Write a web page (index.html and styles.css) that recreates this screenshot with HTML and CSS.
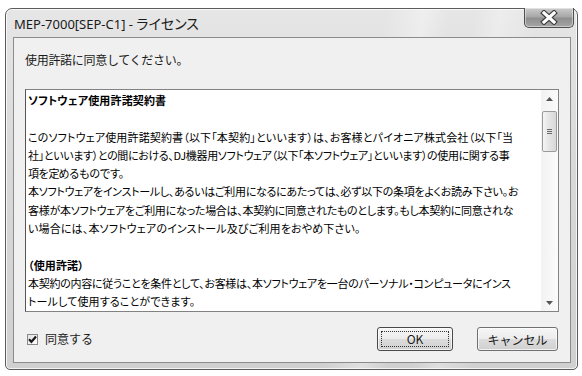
FILE: index.html
```html
<!DOCTYPE html>
<html lang="ja">
<head>
<meta charset="utf-8">
<title>MEP-7000[SEP-C1] - ライセンス</title>
<link rel="stylesheet" href="styles.css">
</head>
<body>
<div class="page">
  <div class="window">
    <div class="titlebar">
      <span class="title">MEP-7000[SEP-C1] - <span class="title-ja">ライセンス</span></span>
      <div class="close">
        <svg width="18" height="15" viewBox="0 0 18 15">
          <path d="M4 3 L14 12 M14 3 L4 12" stroke="#3a3a3a" stroke-width="5.4" stroke-linecap="square"/>
          <path d="M4 3 L14 12 M14 3 L4 12" stroke="#ffffff" stroke-width="3.2" stroke-linecap="square"/>
        </svg>
      </div>
    </div>
    <div class="client">
      <div class="prompt">使用許諾に同意してください。</div>
      <div class="textbox">
        <div class="text">
          <div class="line bold">ソフトウェア使用許諾契約書</div>
          <div class="line">&nbsp;</div>
          <div class="line">このソフトウェア使用許諾契約書（以下「本契約」といいます）は、お客様とパイオニア株式会社（以下「当</div>
          <div class="line tighter">社」といいます）との間における、DJ機器用ソフトウェア（以下「本ソフトウェア」といいます）の使用に関する事</div>
          <div class="line full">項を定めるものです。</div>
          <div class="line tight">本ソフトウェアをインストールし、あるいはご利用になるにあたっては、必ず以下の条項をよくお読み下さい。お</div>
          <div class="line tight">客様が本ソフトウェアをご利用になった場合は、本契約に同意されたものとします。もし本契約に同意されな</div>
          <div class="line">い場合には、本ソフトウェアのインストール及びご利用をおやめ下さい。</div>
          <div class="line">&nbsp;</div>
          <div class="line bold">（使用許諾）</div>
          <div class="line tight">本契約の内容に従うことを条件として、お客様は、本ソフトウェアを一台のパーソナル・コンピュータにインス</div>
          <div class="line">トールして使用することができます。</div>
        </div>
        <div class="scrollbar">
          <div class="sb-btn">
            <svg width="7" height="4" viewBox="0 0 7 4"><path d="M0 4 L3.5 0 L7 4 Z" fill="#555"/></svg>
          </div>
          <div class="thumb">
            <span class="grip"></span><span class="grip"></span><span class="grip"></span>
          </div>
          <div class="track"></div>
          <div class="sb-btn">
            <svg width="7" height="4" viewBox="0 0 7 4"><path d="M0 0 L7 0 L3.5 4 Z" fill="#555"/></svg>
          </div>
        </div>
      </div>
      <div class="footer">
        <label class="agree">
          <span class="checkbox">
            <svg width="9" height="9" viewBox="0 0 9 9"><path d="M1 4.2 L3.4 6.8 L8 1.5" fill="none" stroke="#1a1a1a" stroke-width="2.2"/></svg>
          </span>
          <span class="agree-text">同意する</span>
        </label>
        <div class="buttons">
          <button class="btn btn-default"><span class="focus">OK</span></button>
          <button class="btn btn-cancel">キャンセル</button>
        </div>
      </div>
    </div>
  </div>
</div>
</body>
</html>
```
FILE: styles.css
```css
html, body {
  margin: 0;
  padding: 0;
  background: #ffffff;
}

body {
  font-family: "Noto Sans CJK JP", "Noto Sans", sans-serif;
  color: #111;
}

.page {
  padding: 8px 4px 6px 5px;
}

.window {
  width: 573px;
  height: 362px;
  box-sizing: border-box;
  border: 1px solid #5c5c5c;
  border-radius: 7px 7px 5px 5px;
  background:
    linear-gradient(100deg, rgba(255,255,255,0) 60%, rgba(255,255,255,0.35) 66%, rgba(255,255,255,0) 70%, rgba(255,255,255,0) 74%, rgba(255,255,255,0.3) 78%, rgba(255,255,255,0) 84%),
    linear-gradient(180deg, #e6e6e6 0%, #d9d9d9 40%, #d0d0d0 100%);
  box-shadow: inset 0 0 0 1px rgba(255,255,255,0.75);
  display: flex;
  flex-direction: column;
}

.titlebar {
  height: 28px;
  display: flex;
  justify-content: space-between;
  align-items: flex-start;
  padding-left: 8px;
}

.title {
  font-family: "Noto Sans", "Noto Sans CJK JP", sans-serif;
  font-size: 13px;
  line-height: 18px;
  margin-top: 5px;
  color: #1a1a1a;
}

.title-ja {
  font-family: "Noto Sans CJK JP", sans-serif;
  font-size: 14px;
  font-feature-settings: "palt";
}

.close {
  width: 50px;
  height: 20px;
  margin-right: 3px;
  margin-top: -1px;
  box-sizing: border-box;
  border: 1px solid #4e4e4e;
  border-top: none;
  border-radius: 0 0 5px 5px;
  background: linear-gradient(180deg, #cbcbcb 0%, #a8a8a8 45%, #8f8f8f 55%, #a5a5a5 100%);
  box-shadow: inset 0 0 0 1px rgba(255,255,255,0.45);
  display: flex;
  align-items: center;
  justify-content: center;
}

.client {
  flex: 1;
  margin: 0 6px 6px 7px;
  border: 1px solid #8c8c8c;
  background: #f0f0f0;
  padding: 13px 11px 11px 11px;
  display: flex;
  flex-direction: column;
}

.prompt {
  font-size: 12px;
  line-height: 17px;
  height: 17px;
  color: #1a1a1a;
  letter-spacing: -0.3px;
}

.textbox {
  margin-top: 21px;
  height: 223px;
  box-sizing: border-box;
  border: 1px solid #828282;
  border-left-color: #555;
  background: #ffffff;
  display: flex;
}

.text {
  flex: 1;
  padding: 1px 0 0 2px;
  overflow: hidden;
}

.line {
  font-size: 11px;
  line-height: 18.3px;
  height: 18.3px;
  white-space: nowrap;
  font-feature-settings: "palt";
  letter-spacing: 0.15px;
  color: #000;
}

.line.tight {
  letter-spacing: -0.28px;
}

.line.tighter {
  letter-spacing: -0.34px;
}

.line.full {
  font-feature-settings: normal;
  letter-spacing: -0.8px;
}

.line.bold {
  font-weight: 700;
}

.scrollbar {
  width: 17px;
  display: flex;
  flex-direction: column;
  background: linear-gradient(90deg, #f2f2f2, #fbfbfb);
}

.sb-btn {
  height: 17px;
  display: flex;
  align-items: center;
  justify-content: center;
}

.thumb {
  margin: 4px 1px 0 1px;
  height: 41px;
  box-sizing: border-box;
  border: 1px solid #9b9b9b;
  border-radius: 2px;
  background: linear-gradient(90deg, #f4f4f4, #e4e4e4 50%, #d8d8d8);
  display: flex;
  flex-direction: column;
  align-items: center;
  justify-content: center;
  gap: 1px;
}

.grip {
  width: 5px;
  height: 1px;
  background: #6a6a6a;
}

.track {
  flex: 1;
}

.footer {
  margin-top: 15px;
  height: 24px;
  display: flex;
  align-items: center;
  justify-content: space-between;
}

.agree {
  display: flex;
  align-items: center;
  gap: 7px;
  padding-left: 2px;
}

.checkbox {
  width: 11px;
  height: 11px;
  box-sizing: border-box;
  border: 1px solid #8a8a8a;
  background: linear-gradient(135deg, #e2e2e2, #ffffff);
  display: flex;
  align-items: center;
  justify-content: center;
}

.agree-text {
  font-size: 12px;
  line-height: 16px;
  color: #1a1a1a;
}

.buttons {
  display: flex;
  gap: 24px;
  padding-right: 1px;
}

.btn {
  height: 24px;
  box-sizing: border-box;
  border: 1px solid #707070;
  border-radius: 3px;
  background: linear-gradient(180deg, #f6f6f6 0%, #ececec 48%, #dcdcdc 52%, #d0d0d0 100%);
  box-shadow: inset 0 0 0 1px rgba(255,255,255,0.7);
  font-family: "Noto Sans CJK JP", "Noto Sans", sans-serif;
  font-size: 12px;
  color: #1a1a1a;
  padding: 0;
  display: flex;
  align-items: center;
  justify-content: center;
}

.btn-default {
  width: 76px;
  border-color: #4a4a4a;
  padding: 3px;
}

.focus {
  flex: 1;
  align-self: stretch;
  border: 1px dotted #333;
  display: flex;
  align-items: center;
  justify-content: center;
  line-height: 14px;
}

.btn-cancel {
  width: 81px;
}
```
